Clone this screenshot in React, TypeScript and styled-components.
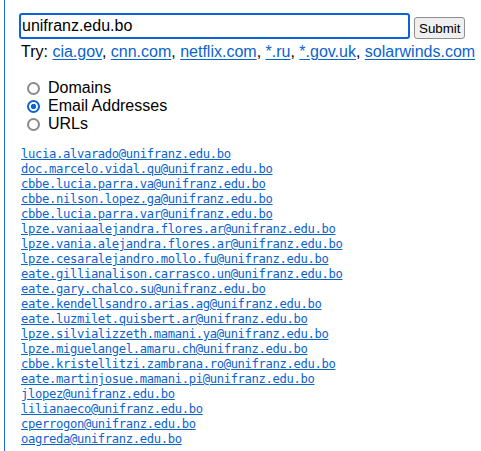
import React from "react";
import styled, { createGlobalStyle } from "styled-components";

const Global = createGlobalStyle`
  html, body { margin: 0; padding: 0; background: #fff; }
  body { font-family: "Liberation Sans", Arial, sans-serif; color: #000; }
`;

const Page = styled.div`
  margin-left: 4px;
  border-left: 1px solid #1a73e8;
  padding: 13px 0 0 16px;
  box-sizing: border-box;
  overflow: hidden;
  height: 451px;
`;

const FormRow = styled.form`
  display: flex;
  align-items: flex-end;
  gap: 4px;
  margin: 0 0 0 -2px;
`;

const SearchInput = styled.input`
  box-sizing: border-box;
  width: 391px;
  height: 26px;
  border: 2px solid #0b63d8;
  border-radius: 3px;
  padding: 0 1px;
  font-family: "Liberation Sans", Arial, sans-serif;
  font-size: 16px;
  color: #000;
  outline: none;
`;

const SubmitButton = styled.button`
  box-sizing: border-box;
  height: 22px;
  padding: 0 4px;
  border: 1px solid #8f8f8f;
  border-radius: 3px;
  background: #efefef;
  font-family: "Liberation Sans", Arial, sans-serif;
  font-size: 13.33px;
  color: #000;
  white-space: nowrap;
`;

const TryLine = styled.div`
  margin-top: 4px;
  font-size: 16px;
  line-height: 18px;
`;

const Link = styled.a`
  color: #0b63ce;
  text-decoration: underline;
  text-underline-offset: 2px;
`;

const RadioGroup = styled.div`
  margin-top: 18px;
  display: flex;
  flex-direction: column;
`;

const RadioLabel = styled.label`
  display: flex;
  align-items: center;
  height: 18px;
  font-size: 16px;
  line-height: 18px;
  margin-left: 1px;
`;

const Radio = styled.input.attrs({ type: "radio" })`
  appearance: none;
  -webkit-appearance: none;
  box-sizing: border-box;
  width: 13px;
  height: 13px;
  margin: 0 8px 0 5px;
  border: 2px solid #8a8a8a;
  border-radius: 50%;
  background: #fff;
  &:checked {
    border-color: #0b63d8;
    background: radial-gradient(circle, #0b63d8 0 2.4px, #fff 3px);
  }
`;

const EmailList = styled.div`
  margin-top: 14px;
  display: flex;
  flex-direction: column;
  align-items: flex-start;
`;

const EmailLink = styled.a`
  font-family: "DejaVu Sans Mono", "Liberation Mono", monospace;
  font-size: 12.2px;
  letter-spacing: -0.35px;
  line-height: 15px;
  color: #0b63ce;
  text-decoration: underline;
  text-underline-offset: 1px;
`;

const tries = ["cia.gov", "cnn.com", "netflix.com", "*.ru", "*.gov.uk", "solarwinds.com"];

const emails = [
  "lucia.alvarado@unifranz.edu.bo",
  "doc.marcelo.vidal.qu@unifranz.edu.bo",
  "cbbe.lucia.parra.va@unifranz.edu.bo",
  "cbbe.nilson.lopez.ga@unifranz.edu.bo",
  "cbbe.lucia.parra.var@unifranz.edu.bo",
  "lpze.vaniaalejandra.flores.ar@unifranz.edu.bo",
  "lpze.vania.alejandra.flores.ar@unifranz.edu.bo",
  "lpze.cesaralejandro.mollo.fu@unifranz.edu.bo",
  "eate.gillianalison.carrasco.un@unifranz.edu.bo",
  "eate.gary.chalco.su@unifranz.edu.bo",
  "eate.kendellsandro.arias.ag@unifranz.edu.bo",
  "eate.luzmilet.quisbert.ar@unifranz.edu.bo",
  "lpze.silvializzeth.mamani.ya@unifranz.edu.bo",
  "lpze.miguelangel.amaru.ch@unifranz.edu.bo",
  "cbbe.kristellitzi.zambrana.ro@unifranz.edu.bo",
  "eate.martinjosue.mamani.pi@unifranz.edu.bo",
  "jlopez@unifranz.edu.bo",
  "lilianaeco@unifranz.edu.bo",
  "cperrogon@unifranz.edu.bo",
  "oagreda@unifranz.edu.bo",
];

export default function App() {
  const [mode, setMode] = React.useState("email");
  return (
    <>
      <Global />
      <Page>
        <FormRow onSubmit={(e) => e.preventDefault()}>
          <SearchInput defaultValue="unifranz.edu.bo" />
          <SubmitButton type="submit">Submit</SubmitButton>
        </FormRow>
        <TryLine>
          Try:{" "}
          {tries.map((t, i) => (
            <React.Fragment key={t}>
              <Link href="#">{t}</Link>
              {i < tries.length - 1 ? ", " : ""}
            </React.Fragment>
          ))}
        </TryLine>
        <RadioGroup>
          <RadioLabel>
            <Radio name="mode" checked={mode === "domains"} onChange={() => setMode("domains")} />
            Domains
          </RadioLabel>
          <RadioLabel>
            <Radio name="mode" checked={mode === "email"} onChange={() => setMode("email")} />
            Email Addresses
          </RadioLabel>
          <RadioLabel>
            <Radio name="mode" checked={mode === "urls"} onChange={() => setMode("urls")} />
            URLs
          </RadioLabel>
        </RadioGroup>
        <EmailList>
          {emails.map((e) => (
            <EmailLink key={e} href="#">
              {e}
            </EmailLink>
          ))}
        </EmailList>
      </Page>
    </>
  );
}
